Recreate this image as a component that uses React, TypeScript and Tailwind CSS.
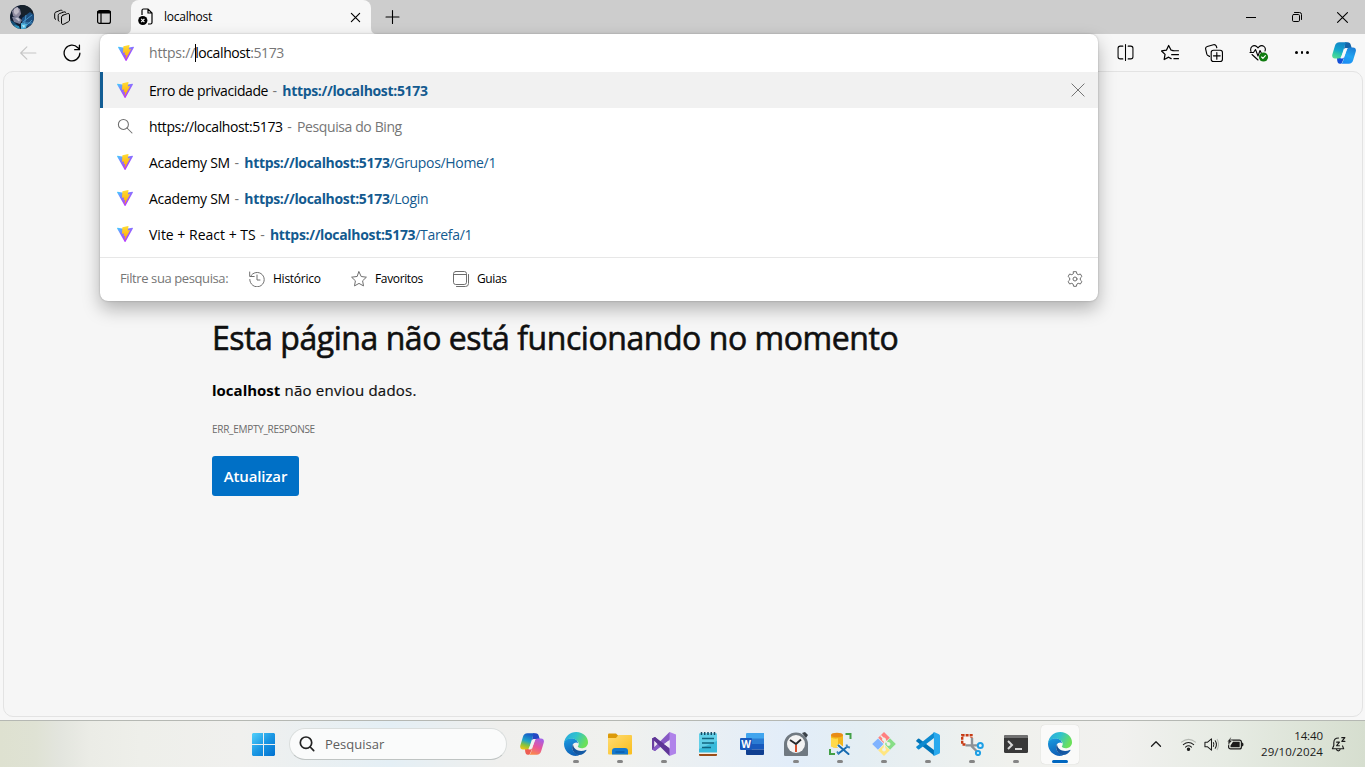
import React from "react";

type IconProps = { className?: string };

function Vite({ className = "size-4" }: IconProps) {
  return (
    <svg viewBox="0 0 32 32" className={className}>
      <defs>
        <linearGradient id="vt-a" x1="0" y1="0" x2="0.6" y2="1">
          <stop offset="0" stopColor="#41d1ff" />
          <stop offset="0.45" stopColor="#8a70ff" />
          <stop offset="1" stopColor="#bd34fe" />
        </linearGradient>
        <linearGradient id="vt-b" x1="0" y1="0" x2="0" y2="1">
          <stop offset="0" stopColor="#ffdd35" />
          <stop offset="1" stopColor="#ffa800" />
        </linearGradient>
      </defs>
      <path fill="url(#vt-a)" d="M31.8 5.2 17.1 31.4a1.1 1.1 0 0 1-1.9 0L.2 5.2a1.1 1.1 0 0 1 1.1-1.6L16 6.2l14.700-2.600a1.100 1.100 0 0 1 1.100 1.600z" />
      <path fill="url(#vt-b)" d="M22.400.2 11.200 2.300a.5.5 0 0 0-.4.400L10 15a.5.5 0 0 0 .6.500l3-.7a.5.5 0 0 1 .6.600l-.9 4.300a.5.5 0 0 0 .7.600l1.800-.6a.5.5 0 0 1 .7.600l-1.400 6.900c-.1.400.5.700.7.300l10-18.600a.5.5 0 0 0-.5-.7l-3.200.6a.5.5 0 0 1-.5-.6L23 .8a.5.5 0 0 0-.6-.6z" />
    </svg>
  );
}

function Line({
  children,
  className = "size-4",
  box = "0 0 16 16",
  width = 1,
}: {
  children: React.ReactNode;
  className?: string;
  box?: string;
  width?: number;
}) {
  return (
    <svg
      viewBox={box}
      className={className}
      fill="none"
      stroke="currentColor"
      strokeWidth={width}
      strokeLinecap="round"
      strokeLinejoin="round"
    >
      {children}
    </svg>
  );
}

function Avatar() {
  return (
    <svg viewBox="0 0 24 24" className="size-6">
      <defs>
        <clipPath id="av">
          <circle cx="12" cy="12" r="12" />
        </clipPath>
      </defs>
      <g clipPath="url(#av)">
        <rect width="24" height="24" fill="#101c30" />
        <path d="M10 0h9l5 8-6 5-7-3z" fill="#17222c" />
        <path d="M12 13l8-6 4 3v8l-6 4-6-4z" fill="#1d4f80" />
        <path d="M13 17l9-7M12 18h11M16 10l-2 12M17 20l5-5" stroke="#4a98cc" strokeWidth=".9" />
        <path d="M11 18l6 1-1 5h-5z" fill="#4fb4e0" />
        <path d="M12 20l3 .5-1 2.500z" fill="#c4ecf7" />
        <path d="M2 6l4-4 4 2 1 5-3 4-5-2z" fill="#8d8a9f" />
        <path d="M4 4l4-2 1 5-3 3-2-2z" fill="#bdb9c6" />
        <path d="M2 12l5-1 5 4-2 4-6-2z" fill="#7c7f98" />
        <path d="M5 13l3-.5 2 2.500-1 1.500z" fill="#c2c4d2" />
        <path d="M0 15l4 2 5 5-4 2-5-4z" fill="#155078" />
        <path d="M4 20l5 1 1 3H7z" fill="#2e93bd" />
      </g>
    </svg>
  );
}

function Edge() {
  return (
    <svg viewBox="0 0 24 24" className="size-6">
      <defs>
        <linearGradient id="ed-a" x1="0" y1="0" x2="1" y2="0.4">
          <stop offset="0" stopColor="#2aa5e0" />
          <stop offset="0.5" stopColor="#2fc2cf" />
          <stop offset="1" stopColor="#6be05a" />
        </linearGradient>
        <linearGradient id="ed-b" x1="0" y1="0" x2="0.3" y2="1">
          <stop offset="0" stopColor="#1b9de2" />
          <stop offset="1" stopColor="#0f62b8" />
        </linearGradient>
        <linearGradient id="ed-c" x1="0" y1="0" x2="1" y2="1">
          <stop offset="0" stopColor="#124a8f" />
          <stop offset="1" stopColor="#1560ad" />
        </linearGradient>
      </defs>
      <path fill="url(#ed-b)" d="M.1 11C.8 7 4 6.200 7.500 6.200c4 0 6.500 2.500 6.500 5-1-1.300-4-1-5.300 1.400C7 16 9 21 14.500 22.700c.8.300 0 .9-.8 1.100C6.500 24.900 0 19 0 12z" />
      <path fill="url(#ed-c)" d="M9 12.200C7 15 8.500 21.300 14 22.900c3 .9 6.800-1.700 8.400-4.500.3-.5-.2-.7-.6-.5C16.500 20.300 9.500 18.500 9 12.200z" />
      <path fill="url(#ed-a)" d="M.1 11C.8 4.500 6 0 12.200 0 19.500 0 24 5.200 24 10.200c0 3.900-3 6-6.200 6-2.700 0-4-.9-4-1.600 0-.6.900-.9.900-2.600 0-3-3.200-5.600-7.200-5.600C4.200 6.400 1.300 7.900.1 11z" />
    </svg>
  );
}

function Copilot({ blue = false }: { blue?: boolean }) {
  const a = blue ? "cp-a1" : "cp-a2";
  const b = blue ? "cp-b1" : "cp-b2";
  return (
    <svg viewBox="0 0 24 24" className="size-6">
      <defs>
        <linearGradient id={a} x1="0.5" y1="0" x2="0.2" y2="1">
          <stop offset="0" stopColor={blue ? "#1284c4" : "#1759c7"} />
          <stop offset="0.45" stopColor={blue ? "#12a3cf" : "#1ea5c9"} />
          <stop offset="0.72" stopColor={blue ? "#2fc9a6" : "#8ac33b"} />
          <stop offset="1" stopColor={blue ? "#58dc94" : "#f4c414"} />
        </linearGradient>
        <linearGradient id={b} x1="0.7" y1="0" x2="0.3" y2="1">
          <stop offset="0" stopColor={blue ? "#1c7fd6" : "#a460e8"} />
          <stop offset="0.5" stopColor={blue ? "#22a4f2" : "#e8549a"} />
          <stop offset="1" stopColor={blue ? "#1a8bf5" : "#fb8a47"} />
        </linearGradient>
      </defs>
      <path fill={blue ? "#1464a8" : "#2446c4"} d="M13 1.200h2.500c2 0 2.800.9 3.300 2.800l.9 3H16c-1.400 0-3 .2-4 1.200z" />
      <path fill={blue ? "#1450d8" : "#ee5d52"} d="M5 17h4c1.600 0 3-.8 3.800-2.200l-2.300 5.700c-.5 1.600-1.300 2.300-2.700 2.300-1.500 0-2.200-1-2.600-3.300z" />
      <path fill={`url(#${b})`} d="M18 6.500h3c2.600 0 3.400 2 2.700 4.300l-2.500 8.200c-.8 2.600-2 3.800-4.500 3.800H8.500c1.400-.2 2-1 2.500-2.600L14.500 9c.6-1.700 1.600-2.500 3.500-2.500z" />
      <path fill={`url(#${a})`} d="M7.500 1.200H15.500c-1.400.3-2 1.200-2.500 2.800L9.500 15c-.5 1.700-1.300 2.500-3 2.500H3C.6 17.500-.3 15.600.4 13.300L2.900 5c.8-2.600 2-3.800 4.600-3.800z" />
      <path fill={blue ? "#f7f9fb" : "#f1f1f1"} d="M12.800 7.200h2.700L12 16.300c-.4.700-.9 1.200-1.700 1.200H8.500z" />
    </svg>
  );
}

function Start() {
  return (
    <svg viewBox="0 0 23 23" className="size-[23px]">
      <defs>
        <linearGradient id="st" gradientUnits="userSpaceOnUse" x1="0" y1="0" x2="23" y2="23">
          <stop offset="0" stopColor="#52d0fb" />
          <stop offset="0.5" stopColor="#1b97e3" />
          <stop offset="1" stopColor="#0070d0" />
        </linearGradient>
      </defs>
      <path fill="url(#st)" d="M1 0h10v11H0V1zM12 0h10l1 1v10H12zM0 12h11v11H1l-1-1zM12 12h11v10l-1 1H12z" />
    </svg>
  );
}

function Folder() {
  return (
    <svg viewBox="0 0 24 24" className="size-6">
      <defs>
        <linearGradient id="fo" x1="0" y1="0" x2="1" y2="1">
          <stop offset="0" stopColor="#ffdc73" />
          <stop offset="1" stopColor="#f9bd1c" />
        </linearGradient>
      </defs>
      <path fill="#dc9a08" d="M0 2.500Q0 1.500 1 1.500h7l2.500 2.500V9H0z" />
      <path fill="url(#fo)" d="M0 6h8l2.500-3H23q1 0 1 1v17.500q0 1-1 1H1q-1 0-1-1z" />
      <path fill="#1378ce" d="M4 22.500V19q0-3 3-3h10q3 0 3 3v3.500z" />
      <path fill="#0c5fae" d="M7.500 19.200h9v1.600h-9z" />
    </svg>
  );
}

function VisualStudio() {
  return (
    <svg viewBox="0 0 24 24" className="size-6">
      <path fill="#6a3fa0" d="M0 6.500 3 5l3.500 3.500v7L3 19 0 17.500z" />
      <path fill="#8659c4" d="M3 19 0 17.500 17.500 0l2 3-2 5.200z" />
      <path fill="#5e3596" d="M3 5 17.500 16l1.500 5-1.500 3L0 6.500z" />
      <path fill="#b083ea" d="M17.500 0 24 2.500v19L17.500 24z" />
      <path fill="#eee9f3" d="M2.200 8.700v6.600L5.500 12zM17.500 8 12 12l5.500 4z" />
    </svg>
  );
}

function Notepad() {
  return (
    <svg viewBox="0 0 24 24" className="size-6">
      <path fill="#9a4d18" d="M3 20h18v3q0 1-1 1H4q-1 0-1-1z" />
      <path fill="#f4eee6" d="M3 20h18v2H3z" />
      <path fill="#39bada" d="M3 2.500Q3 1.500 4 1.500h16q1 0 1 1v18H3z" />
      <path fill="#62d0e8" d="M3 2.500Q3 1.500 4 1.500h16q1 0 1 1V9L3 17z" />
      <path stroke="#154c65" strokeWidth="1.500" d="M5.500 0v3M8.700 0v3M12 0v3M15.300 0v3M18.500 0v3" />
      <path stroke="#11647f" strokeWidth="1.500" d="M6 6.500h12M6 11h12M6 15.500h9" />
    </svg>
  );
}

function Word() {
  return (
    <span className="relative flex h-6 w-6 items-center">
      <svg viewBox="0 0 24 24" className="size-6">
        <path fill="#41a5ee" d="M6 2Q6 1 7 1h17v6H6z" />
        <path fill="#2b7cd3" d="M6 6.500h18V12H6z" />
        <path fill="#185abd" d="M6 12h18v5.500H6z" />
        <path fill="#103f91" d="M6 17.500h18V22q0 1-1 1H7q-1 0-1-1z" />
        <rect x="0" y="6" width="12" height="12" rx="1" fill="#1859bd" />
      </svg>
      <span className="absolute top-[6px] left-0 w-3 text-center font-[Open_Sans,sans-serif] text-[10px] leading-3 font-bold text-white">W</span>
    </span>
  );
}

function Clock() {
  return (
    <svg viewBox="0 0 24 24" className="size-6">
      <path fill="#3b4249" d="m18 1 3-1 3 3-2 3z" />
      <path fill="#707981" d="M0 12A12 12 0 0 1 12 .500 12 12 0 0 1 24 12v11q0 1-1 1H1q-1 0-1-1z" />
      <circle cx="12" cy="12" r="9" fill="#f3f3f3" />
      <path stroke="#25282b" strokeWidth="1.900" d="m6 8 6 4L17 7.500" fill="none" />
      <path stroke="#d8502c" strokeWidth="2" d="M12 13v7" />
    </svg>
  );
}

function Ssms() {
  return (
    <svg viewBox="0 0 24 24" className="size-6">
      <path fill="none" stroke="#43a047" strokeWidth="2" d="M17.500 2h5v5M2 17v5h5" />
      <path fill="#f3b51b" d="M3 3v10.500c0 3 12 3 12 0V3z" />
      <path fill="#ffda4b" d="M3 5.500c3 1.500 6 1.200 7 .8v9.300c-4 .2-7-.6-7-2.100z" />
      <ellipse cx="9" cy="3" rx="6" ry="2.300" fill="#e88c17" />
      <path stroke="#e6f1fa" strokeWidth="4" d="m10 13 10 9M20.500 13.500l-10 8" />
      <path stroke="#176bb0" strokeWidth="2" strokeLinecap="round" d="m10.500 13.500 10 8.500M19.500 14.500l-9 7" />
      <path stroke="#3e85c0" strokeWidth="1.800" d="m18.500 12.500.5 2.500 3 .5M9 19.500l2 3" fill="none" />
    </svg>
  );
}

function GitGui() {
  return (
    <svg viewBox="0 0 24 24" className="size-6">
      <path fill="#ff8080" d="m12 0 5.800 5.800L12 11.600 6.200 5.800z" />
      <path fill="#80b3ff" d="m6 6.500 5.500 5.500L6 17.800.2 12z" />
      <path fill="#87de87" d="m18 6.200 5.800 5.800L18 17.800 12.500 12z" />
      <path fill="#ffe680" d="m12 12.400 5.800 5.800L12 24l-5.800-5.800z" />
      <g fill="#eef3ea" stroke="#eef3ea">
        <path d="m8.500 3.500 4 4V18M12 7l4.500 5" fill="none" strokeWidth="1.400" />
        <circle cx="12" cy="7.500" r="1.500" />
        <circle cx="16.500" cy="12" r="1.500" />
        <circle cx="12" cy="17.500" r="1.500" />
      </g>
    </svg>
  );
}

function VsCode() {
  return (
    <svg viewBox="0 0 24 24" className="size-6">
      <path fill="#0073b7" d="M.500 8.200 2 6.800q.600-.5 1.300 0L18 18v5.500L.5 9.500q-.7-.6 0-1.300z" />
      <path fill="#0d8ad0" d="M.500 15.800 2 17.200q.600.500 1.300 0L18 6V.500L.5 14.500q-.7.700 0 1.300z" />
      <path fill="#29a9ee" d="M17 .600q.500-.8 1.500-.4L23 2.300q1 .5 1 1.500v16.400q0 1-1 1.500l-4.500 2.100q-1 .4-1.500-.4.900.5.900-.7V1.300Q17.900.1 17 .6z" />
    </svg>
  );
}

function Snip() {
  return (
    <svg viewBox="0 0 24 24" className="size-6">
      <path fill="#f6f6f6" d="M3 3h9v10H3z" />
      <path fill="none" stroke="#c73b15" strokeWidth="2.400" strokeDasharray="3 1" d="M5.500 12.500H2.200V3.200h9.300V6" />
      <path fill="none" stroke="#8d9297" strokeWidth="2.400" d="M12 6v8.500l5 5M5.500 13.400H18" />
      <circle cx="20.300" cy="13.500" r="2.500" fill="#e2f4ff" stroke="#1e9fe5" strokeWidth="2" />
      <circle cx="18" cy="21" r="2.100" fill="#e2f4ff" stroke="#1e9fe5" strokeWidth="2" />
    </svg>
  );
}

function Terminal() {
  return (
    <svg viewBox="0 0 24 24" className="size-6">
      <rect y="3" width="24" height="18" rx="1.500" fill="#383838" />
      <path fill="#717171" d="M0 4.500Q0 3 1.500 3h21Q24 3 24 4.500V6H0z" />
      <path fill="none" stroke="#d8d8d8" strokeWidth="2" d="m4 9 4 4-4 4" />
      <path stroke="#fff" strokeWidth="1.600" d="M11 17h7" />
    </svg>
  );
}

const apps: { name: string; icon: React.ReactNode; state?: "open" | "active" }[] = [
  { name: "copilot", icon: <Copilot /> },
  { name: "edge", icon: <Edge />, state: "open" },
  { name: "explorer", icon: <Folder />, state: "open" },
  { name: "vs", icon: <VisualStudio />, state: "open" },
  { name: "notepad", icon: <Notepad /> },
  { name: "word", icon: <Word /> },
  { name: "clock", icon: <Clock />, state: "open" },
  { name: "ssms", icon: <Ssms />, state: "open" },
  { name: "git", icon: <GitGui />, state: "open" },
  { name: "code", icon: <VsCode />, state: "open" },
  { name: "snip", icon: <Snip />, state: "open" },
  { name: "terminal", icon: <Terminal />, state: "open" },
  { name: "edge-active", icon: <Edge />, state: "active" },
];

function TabStrip() {
  return (
    <div className="flex h-[34px] items-stretch bg-[#cdcdcd] text-black">
      <div className="flex w-[131px] items-center pl-[10px]">
        <Avatar />
        <Line className="ml-5 size-4" width={1}>
          <path d="m8.800 6.300 4.800-1.700q1.600-.4 1.900 1v5.500q0 1.100-.9 1.500l-4.800 2.600q-1.900.8-2.300-.9V8.200q0-1.300 1.300-1.900z" />
          <path d="M5 12.300q-.8-.2-.8-1.300V6.300q0-1.200 1.100-1.600L10 2.900q1.200-.3 1.800.5" />
          <path d="M1.600 10.400q-.9-.3-.9-1.400V4.700q0-1.200 1.100-1.600l4.600-1.800q1.200-.4 1.900.4" />
        </Line>
        <Line className="ml-[26px] size-4" width={1.200}>
          <rect x="1.600" y="1.600" width="12.800" height="12.800" rx="2" />
          <path d="M2.300 3.200h11.400" strokeWidth="2.600" />
          <path d="M5 4.500v9.500" />
        </Line>
      </div>
      <div className="relative flex w-60 items-center rounded-t-lg bg-[#f7f7f7]">
        <svg viewBox="0 0 6 6" className="absolute bottom-0 -left-1.5 size-1.5"><path d="M6 0v6H0q6 0 6-6z" fill="#f7f7f7" /></svg>
        <svg viewBox="0 0 6 6" className="absolute -right-1.5 bottom-0 size-1.5"><path d="M0 0v6h6Q0 6 0 0z" fill="#f7f7f7" /></svg>
        <svg viewBox="0 0 16 18" className="ml-[7px] h-[18px] w-4">
          <path d="M4 7V2.500Q4 1 5.500 1H10l4 4v9.500q0 1.500-1.500 1.500H10M10 1v4h4" fill="none" stroke="#000" strokeWidth="1.200" />
          <circle cx="4.800" cy="12.500" r="4.600" />
          <path d="m3.200 10.900 3.200 3.200m0-3.200-3.200 3.200" stroke="#fff" strokeWidth="1.200" />
        </svg>
        <span className="ml-[10px] flex-1 text-[12px] tracking-[-0.25px]">localhost</span>
        <Line className="mr-[10px] size-[11px]" width={1.700}>
          <path d="m2 2 12 12M14 2 2 14" />
        </Line>
      </div>
      <Line className="ml-[13px] size-4 self-center" width={1.100}>
        <path d="M8.500 1.500v13M2 8h13" />
      </Line>
      <div className="ml-auto flex items-center">
        <div className="flex w-[46px] justify-center pl-0.5"><svg viewBox="0 0 10 10" className="size-[10px]"><path d="M0 5.500h10" stroke="#000" /></svg></div>
        <div className="flex w-[46px] justify-center pl-0.5">
          <Line box="0 0 10 10" className="size-[10px]" width={1}>
            <rect x=".5" y="2.500" width="7" height="7" rx="1.200" />
            <path d="M2.500.5h5q2 0 2 2v5" />
          </Line>
        </div>
        <div className="flex w-[46px] justify-center pl-px">
          <Line box="0 0 10 10" className="size-[11px]" width={1}><path d="m.500.500 9 9m0-9-9 9" /></Line>
        </div>
      </div>
    </div>
  );
}

function Toolbar() {
  return (
    <div className="flex h-[37px] items-center bg-[#f7f7f7] text-black">
      <Line className="ml-[19px] size-[18px] text-[#c6c6c6]" width={1}>
        <path d="M15 8H1.500M7 2.500 1.500 8 7 13.500" />
      </Line>
      <Line className="ml-[26px] size-[18px]" width={1.150}>
        <path d="M15 8.200A7 7 0 1 1 13.200 3.300L14.600 5M14.600 1v4h-4.200" />
      </Line>
      <div className="ml-auto flex items-center">
        <div className="flex w-11 justify-center pr-px">
          <Line className="size-[17px]" width={1}><path d="M5.500 2H3Q1 2 1 4v8q0 2 2 2h2.500M10.500 2H13q2 0 2 2v8q0 2-2 2h-2.500M8 .5v15" /></Line>
        </div>
        <div className="flex w-11 justify-center">
          <Line className="size-[18px]" width={1.100}><path d="m11.500 6-2.500-.500L6.800 1.300 4.800 5.500.500 6.200l3.100 3-.8 4.600 4-2.100L9 13M10.500 6h5M9.500 9.500h6M11.500 13h4" /></Line>
        </div>
        <div className="flex w-11 justify-center">
          <Line className="size-[18px]" width={1}>
            <rect x="5.500" y="5.500" width="10" height="10" rx="2" />
            <path d="M10.500 7.500v6m-3-3h6M4 11l-1-.500q-1-.5-1.400-1.500L.600 4.500Q.200 2.800 2 2.200L7.500.700q1.700-.400 2.500 1.100l.500 1.500" />
          </Line>
        </div>
        <div className="flex w-11 justify-center pl-0.5">
          <svg viewBox="0 0 20 18" className="h-[18px] w-5" fill="none" stroke="#000" strokeWidth="1.100" strokeLinecap="round" strokeLinejoin="round">
            <path d="M2 7.500C.5 3 4.500 0 8 2.800l1 1 1-1C13.500 0 17.500 3 16 7M3 10.500l6 5.500M1 8.500h3.500l2-3L9 12l2-5.500 1.500 3" />
            <circle cx="14.500" cy="13" r="4.600" fill="#107c10" stroke="none" />
            <path d="m12.600 13 1.300 1.300 2.500-2.600" stroke="#fff" />
          </svg>
        </div>
        <div className="flex w-11 items-center justify-center gap-[3px]">
          <i className="size-[2.500px] rounded-full bg-black" />
          <i className="size-[2.500px] rounded-full bg-black" />
          <i className="size-[2.500px] rounded-full bg-black" />
        </div>
        <div className="flex w-[41px] justify-center pr-px"><Copilot blue /></div>
      </div>
    </div>
  );
}

function Suggestion({ title, bold, path, active, search, tracking = "tracking-[-0.27px]" }: {
  title: string;
  bold?: string;
  path?: string;
  active?: boolean;
  search?: string;
  tracking?: string;
}) {
  return (
    <div className={active ? "flex h-9 items-center border-l-[3px] border-[#125d94] bg-[#f1f1f1] pl-[14px]" : "flex h-9 items-center pl-[17px]"}>
      {search ? (
        <Line className="size-4 text-[#6e6e6e]" width={1.050}><circle cx="6.400" cy="6.400" r="5" /><path d="m10 10 5 5" /></Line>
      ) : (
        <Vite />
      )}
      <div className="ml-4 flex pt-px text-[14px] whitespace-pre">
        <span className={tracking}>{title}</span>
        <span className="tracking-[0.85px] text-[#767676]"> - </span>
        {search && <span className="tracking-[-0.4px] text-[#767676]">{search}</span>}
        {bold && <span className="font-bold tracking-[-0.33px] text-[#135a8f]">{bold}</span>}
        {path && <span className="tracking-[-0.33px] text-[#135a8f]">{path}</span>}
      </div>
      {active && (
        <Line className="mr-[13px] ml-auto size-[14px] text-[#6e6e6e]" width={1.100}><path d="m1 1 14 14M15 1 1 15" /></Line>
      )}
    </div>
  );
}

function Omnibox() {
  return (
    <div className="absolute top-[34px] left-[100px] flex h-[267px] w-[998px] flex-col overflow-hidden rounded-lg bg-white text-black shadow-[0_0_2px_rgba(0,0,0,0.25),0_8px_18px_rgba(0,0,0,0.28)]">
      <div className="flex h-[38px] items-center pl-[18px]">
        <Vite />
        <div className="ml-[15px] flex items-center pb-px text-[14px] tracking-[-0.4px]">
          <span className="tracking-[-0.2px] text-[#767676]">https://</span>
          <i className="-mr-px h-[18px] w-px bg-black" />
          <span>localhost</span>
          <span className="text-[#767676]">:5173</span>
        </div>
      </div>
      <Suggestion active title="Erro de privacidade" bold="https://localhost:5173" tracking="tracking-[-0.42px]" />
      <Suggestion title="https://localhost:5173" search="Pesquisa do Bing" tracking="tracking-[-0.38px]" />
      <Suggestion title="Academy SM" bold="https://localhost:5173" path="/Grupos/Home/1" />
      <Suggestion title="Academy SM" bold="https://localhost:5173" path="/Login" />
      <Suggestion title="Vite + React + TS" bold="https://localhost:5173" path="/Tarefa/1" tracking="tracking-[0px]" />
      <div className="mt-[5px] flex flex-1 items-center border-t border-[#e7e7e7] pb-px pl-5 text-[12px] tracking-[-0.25px]">
        <span className="w-[129px] text-[13px] tracking-[-0.4px] text-[#767676]">Filtre sua pesquisa:</span>
        <div className="flex w-[102px] items-center gap-2">
          <Line className="size-4 text-[#6e6e6e]" width={1}>
            <path d="M1.500 5.500A7.200 7.200 0 1 1 .800 8.500M.700 1v4.500h4.500M8 4v5h3" />
          </Line>
          <span>Histórico</span>
        </div>
        <div className="flex w-[102px] items-center gap-2">
          <Line className="size-4 text-[#6e6e6e]" width={1}>
            <path d="m8 .800 2.200 4.700 5.200.7-3.800 3.600.9 5.100L8 12.400l-4.500 2.500.9-5.100L.600 6.200l5.200-.7z" />
          </Line>
          <span className="tracking-[-0.36px]">Favoritos</span>
        </div>
        <div className="flex items-center gap-2">
          <Line className="size-4 text-[#6e6e6e]" width={1}>
            <rect x=".5" y=".5" width="13" height="13" rx="2.200" />
            <path d="M.500 3.500h13M15.500 3.500v9q0 3-3 3h-9" />
          </Line>
          <span className="tracking-[-0.4px]">Guias</span>
        </div>
        <Line className="mr-[15px] ml-auto size-4 text-[#6e6e6e]" width={1}>
          <circle cx="8" cy="8" r="2" />
          <path d="M6.600.700h2.800l.5 2.200 1.300.8 2.200-.7 1.500 2.500L13.300 7v2l1.600 1.500-1.500 2.500-2.200-.7-1.300.8-.5 2.200H6.600l-.5-2.200-1.300-.8-2.200.7-1.500-2.500L2.700 9V7L1.100 5.500 2.600 3l2.200.7 1.300-.8z" />
        </Line>
      </div>
    </div>
  );
}

function ErrorPage() {
  return (
    <div className="mr-[2px] ml-[3px] flex h-[646px] flex-col items-start rounded-[10px] border border-[#e3e3e3] bg-[#f6f6f6] pt-[244px] pl-[208px] text-[#101010]">
      <h1 className="text-[32px] leading-[44px] font-medium tracking-[-0.45px] whitespace-nowrap [-webkit-text-stroke:0.6px_#101010]">Esta página não está funcionando no momento</h1>
      <p className="mt-[18px] text-[15px] leading-6 [-webkit-text-stroke:0.2px_#101010]"><b className="font-bold text-black [-webkit-text-stroke:0px]">localhost</b><span className="tracking-[0.23px]"> não enviou dados.</span></p>
      <p className="mt-[19px] text-[10px] leading-4 tracking-[-0.28px] text-[#6b6b6b]">ERR_EMPTY_RESPONSE</p>
      <button className="mt-[19px] h-10 w-[87px] rounded-[3px] bg-[#0070c6] text-[15px] font-semibold tracking-[-0.15px] text-white">Atualizar</button>
    </div>
  );
}

function Taskbar() {
  return (
    <div className="flex h-[47px] items-stretch border-t border-[#b5b8b3] bg-[linear-gradient(90deg,#dee1d0_0px,#dfe2d4_35px,#e3e5de_60px,#ebece6_90px,#eeefea_140px,#f0f0ee_240px,#e4eff5_390px,#efefed_500px,#f0f1ee_620px,#e2edf9_790px,#e4eef3_860px,#f0f1ed_1010px,#f1f1ef_1120px,#e6ebe3_1230px,#d6decf_1365px)]">
      <div className="ml-[241px] flex w-11 items-center justify-center pt-px"><Start /></div>
      <div className="ml-1 flex h-8 w-[218px] items-center self-center rounded-full border border-[#dadedd] border-b-[#bfc4c3] bg-[#fafbfb] pl-[9px] text-[13px] text-[#5e5e5e]">
        <Line className="size-4 text-[#222]" width={1.700}><circle cx="7" cy="6.700" r="5.700" /><path d="m11.200 11 3.500 3.700" /></Line>
        <span className="ml-[10px] pt-px">Pesquisar</span>
      </div>
      <div className="ml-[3px] flex">
        {apps.map((app) => (
          <div key={app.name} className="flex w-11 items-center justify-center">
            <div className={app.state === "active" ? "relative flex h-[39px] w-[38px] items-center justify-center rounded bg-[#fafaf9] shadow-[0_0_1px_rgba(0,0,0,0.2)]" : "relative flex h-[39px] w-[38px] items-center justify-center"}>
              {app.icon}
              {app.state === "open" && <i className="absolute bottom-px left-4 h-[3px] w-1.5 rounded-full bg-[#858585]" />}
              {app.state === "active" && <i className="absolute bottom-px left-[11px] h-[3px] w-4 rounded-full bg-[#0067c0]" />}
            </div>
          </div>
        ))}
      </div>
      <div className="ml-auto flex items-center pr-[19px] text-[#1b1b1b]">
        <Line className="mr-[19px] size-3" width={1.700}><path d="m2 11 6-6 6 6" /></Line>
        <Line className="mr-2 size-[15px]" width={1.100}>
          <path d="M.500 5.500Q8-.500 15.500 5.500" stroke="#b5b9b3" />
          <path d="M2.500 8.200Q8 3.500 13.500 8.200M4.800 10.800Q8 8 11.200 10.800" />
          <circle cx="8" cy="13" r="1.300" fill="currentColor" />
        </Line>
        <Line className="mr-2 size-[15px]" width={1.100}>
          <path d="M1 5.700h2.500L8 2v12l-4.500-3.700H1zM10 6q1.300 2 0 4M12 4q2.500 4 0 8" />
          <path d="M14 2.500q3 5.500 0 11" stroke="#b5b9b3" />
        </Line>
        <svg viewBox="0 0 17 14" className="h-[14px] w-[17px]">
          <rect x="1.600" y="3.100" width="12.800" height="8.800" rx="2" fill="none" stroke="#1b1b1b" strokeWidth="1.200" />
          <path d="M6 4.800h6.700v5.400H3.500V8.500zM15 5.500q1.500 0 1.500 2T15 9.500z" fill="#1b1b1b" />
          <path d="M4.200-.2.200 4.800H2l-.8 3.500 4-4.800H3.500z" fill="#1b1b1b" stroke="#e4e9e0" strokeWidth=".5" />
        </svg>
        <div className="ml-[7px] flex w-[72px] flex-col items-end text-[11.500px] leading-4 tracking-[0.1px]">
          <span className="tracking-[-0.1px]">14:40</span>
          <span>29/10/2024</span>
        </div>
        <Line className="ml-2 size-[15px]" width={1.200}>
          <path d="M8 1Q3 1 3 6v3l-1.500 3.500h12L12.300 9.500M5.800 13q.3 1.800 2 1.800t2-1.800M6 5.500h3L6 9.300h3M11.500.700h3.300l-3.300 4h3.300" />
        </Line>
      </div>
    </div>
  );
}

export default function App() {
  return (
    <div className="relative flex h-[767px] w-[1365px] flex-col overflow-hidden bg-[#f7f7f7] font-['Open_Sans','Noto_Sans',sans-serif]">
      <TabStrip />
      <Toolbar />
      <ErrorPage />
      <div className="h-[3px] bg-[#f7f7f7]" />
      <Taskbar />
      <Omnibox />
    </div>
  );
}
